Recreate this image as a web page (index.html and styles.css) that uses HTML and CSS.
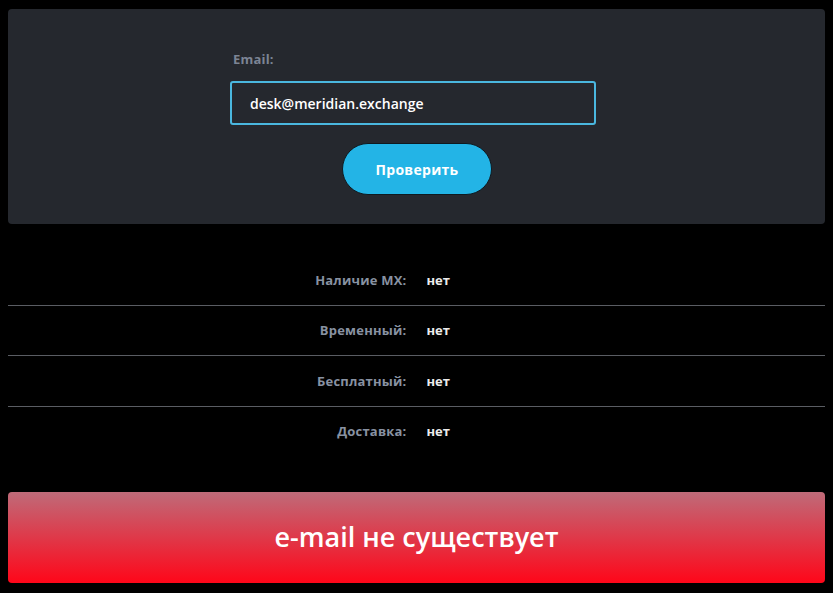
FILE: index.html
```html
<!DOCTYPE html>
<html lang="ru">
<head>
<meta charset="utf-8">
<title>Проверка e-mail</title>
<link rel="stylesheet" href="styles.css">
</head>
<body>
  <section class="card">
    <form class="check-form">
      <label class="field-label" for="email">Email:</label>
      <input class="field-input" id="email" type="text" value="desk@meridian.exchange">
      <button class="btn-check" type="button">Проверить</button>
    </form>
  </section>

  <div class="results">
    <div class="row">
      <div class="row-label">Наличие MX:</div>
      <div class="row-value">нет</div>
    </div>
    <div class="row">
      <div class="row-label">Временный:</div>
      <div class="row-value">нет</div>
    </div>
    <div class="row">
      <div class="row-label">Бесплатный:</div>
      <div class="row-value">нет</div>
    </div>
    <div class="row">
      <div class="row-label">Доставка:</div>
      <div class="row-value">нет</div>
    </div>
  </div>

  <div class="alert">e-mail не существует</div>
</body>
</html>
```

FILE: styles.css
```css
html, body {
  background: #000;
}

body {
  margin: 9px 8px 8px;
  font-family: "Open Sans", "Noto Sans", sans-serif;
  color: #fff;
}

.card {
  background: #25282e;
  border-radius: 4px;
  height: 215px;
  box-sizing: border-box;
  padding: 40px 7px 0 0;
}

.check-form {
  width: 366px;
  margin: 0 auto;
  display: flex;
  flex-direction: column;
}

.field-label {
  font-size: 13px;
  font-weight: 700;
  color: #7c8494;
  padding-left: 3px;
  line-height: 20px;
  letter-spacing: 0.2px;
}

.field-input {
  margin-top: 12px;
  height: 44px;
  box-sizing: border-box;
  background: #25282e;
  border: 2px solid #4ab7df;
  border-radius: 3px;
  padding: 0 18px;
  font-family: inherit;
  font-size: 14px;
  font-weight: 600;
  color: #fff;
  letter-spacing: 0;
  outline: none;
}

.btn-check {
  align-self: flex-start;
  margin: 18px 0 0 112px;
  width: 150px;
  height: 52px;
  border-radius: 26px;
  border: 1px solid #0f1a20;
  background: #23b4e6;
  color: #fff;
  font-family: inherit;
  font-size: 14px;
  font-weight: 700;
  letter-spacing: 0.3px;
  cursor: pointer;
}

.results {
  margin-top: 31px;
}

.row {
  display: grid;
  grid-template-columns: 1fr 1fr;
  height: 49.5px;
  align-items: center;
  border-bottom: 1px solid #5a5d63;
}

.row:last-child {
  border-bottom: none;
}

.row-label {
  text-align: right;
  padding-right: 10px;
  font-size: 13px;
  font-weight: 700;
  color: #8892a2;
  letter-spacing: 0.2px;
}

.row-value {
  padding-left: 10px;
  font-size: 13px;
  font-weight: 700;
  color: #ececec;
}

.alert {
  margin-top: 36px;
  height: 91px;
  border-radius: 4px;
  background: linear-gradient(to bottom, #bf6b79, #ff0619);
  display: flex;
  align-items: center;
  justify-content: center;
  padding-bottom: 2px;
  box-sizing: border-box;
  font-family: "Open Sans", sans-serif;
  font-size: 27px;
  font-weight: 600;
  color: #fff;
}
```
